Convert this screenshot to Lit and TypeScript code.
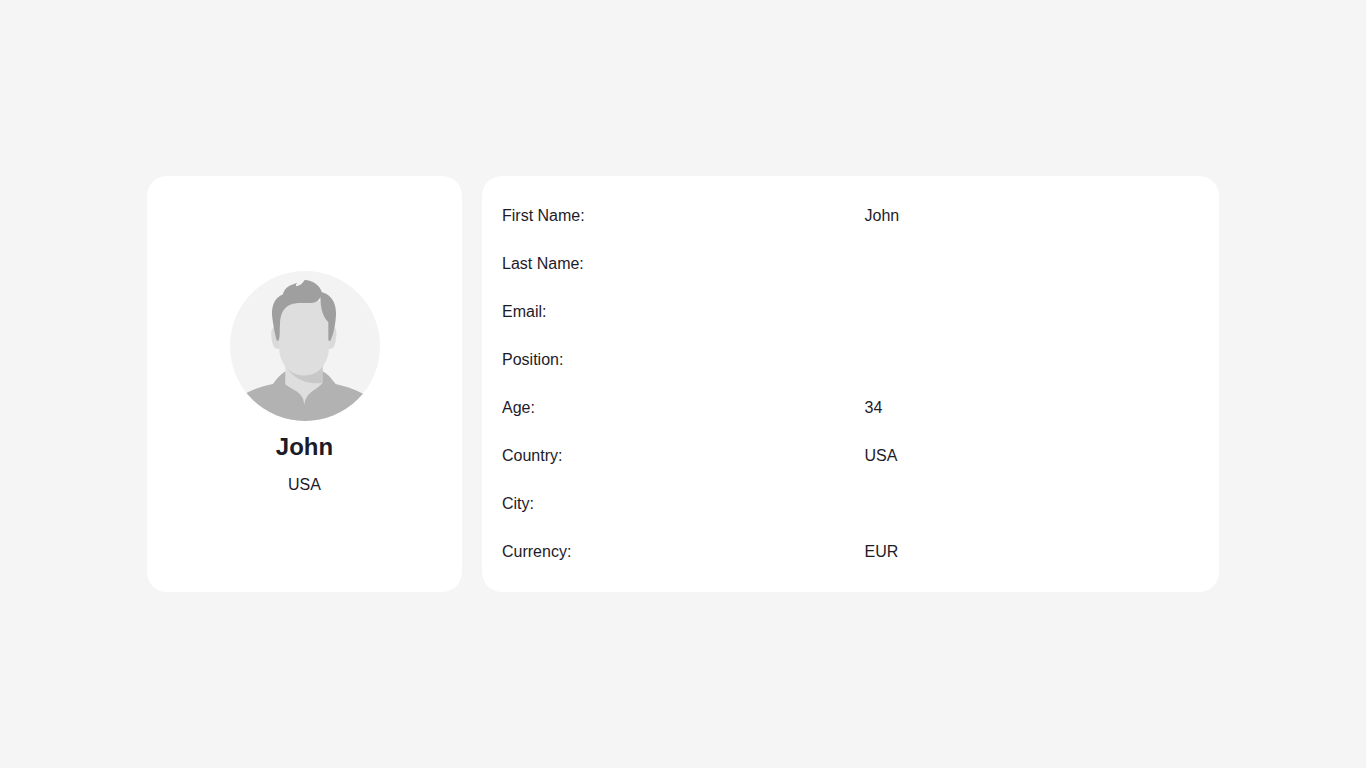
import { LitElement, css, html } from "lit";
import { customElement, property } from "lit/decorators.js";

interface Profile {
  firstName: string;
  lastName: string;
  email: string;
  position: string;
  age: string;
  country: string;
  city: string;
  currency: string;
}

@customElement("user-avatar")
export class UserAvatar extends LitElement {
  static styles = css`
    :host {
      display: block;
      width: 150px;
      height: 150px;
      border-radius: 50%;
      overflow: hidden;
      background: #f3f3f3;
    }
    .picture {
      display: block;
      width: 100%;
      height: 100%;
    }
  `;

  render() {
    return html`
      <svg class="picture" viewBox="15 18 450 450" aria-hidden="true">
        <!-- ears -->
        <path fill="#dadada" d="M146 187C136 194 138 214 141 227C144 243 150 254 162 251L166 190Z" />
        <path fill="#dadada" d="M328 187C337 194 335 214 332 227C329 243 325 253 312 251L308 190Z" />
        <!-- neck -->
        <path fill="#dedede" d="M181 290H293V400L240 440L181 400Z" />
        <path fill="#c9c8c8" d="M181 303C194 321 215 331 238 331C262 331 281 321 293 300V353C250 360 206 344 181 303Z" />
        <!-- face -->
        <path fill="#dedede" d="M163 130Q166 98 238 100Q309 98 312 165V250C311 273 304 288 294 304C280 322 262 331 238 331C212 331 191 319 180 303C168 286 164 271 162 250Z" />
        <!-- shirt -->
        <path fill="#b2b2b2" d="M181 319V358C200 376 236 378 238 420C242 379 277 375 293 353V319C311 329 319 341 332 357C358 363 388 372 414 386V480H60V386C88 372 116 362 144 357C155 342 165 329 181 319Z" />
        <!-- hair -->
        <path fill="#9f9f9f" d="M174 88C177 69 194 60 217 53C212 58 212 61 214 64C224 62 232 57 239 45C262 46 284 60 291 82C316 88 333 111 333 144C333 173 325 210 317 225Q314 231 310 225V172C294 155 287 133 286 96C281 109 271 114 252 114H231C183 112 166 137 165 178C163 201 166 215 161 226Q158 231 155 225C150 209 144 177 141 150C140 120 150 98 174 88Z" />
      </svg>
    `;
  }
}

@customElement("app-root")
export class AppRoot extends LitElement {
  static styles = css`
    :host {
      display: flex;
      align-items: center;
      justify-content: center;
      box-sizing: border-box;
      min-height: 100vh;
      padding: 20px;
      background: #f5f5f5;
      color: #1e1b29;
      font: 16px/24px "Liberation Sans", Arial, sans-serif;
    }
    .profile {
      display: grid;
      grid-template-columns: minmax(0, 315fr) minmax(0, 737fr);
      gap: 20px;
      width: 100%;
      max-width: 1072px;
    }
    .card {
      background: #ffffff;
      border-radius: 20px;
    }
    .summary {
      display: flex;
      flex-direction: column;
      align-items: center;
      justify-content: center;
      gap: 8px;
      padding: 20px;
    }
    .name {
      margin: 0;
      font-size: 24px;
      line-height: 36px;
      font-weight: 700;
    }
    .country {
      margin: 0;
    }
    .details {
      margin: 0;
      padding: 16px 20px;
    }
    .row {
      display: grid;
      grid-template-columns: 1fr 1fr;
      gap: 28px;
      padding: 12px 0;
    }
    .value {
      margin: 0;
    }
  `;

  @property({ attribute: false })
  profile: Profile = {
    firstName: "John",
    lastName: "",
    email: "",
    position: "",
    age: "34",
    country: "USA",
    city: "",
    currency: "EUR",
  };

  render() {
    const p = this.profile;
    const rows: [string, string][] = [
      ["First Name:", p.firstName],
      ["Last Name:", p.lastName],
      ["Email:", p.email],
      ["Position:", p.position],
      ["Age:", p.age],
      ["Country:", p.country],
      ["City:", p.city],
      ["Currency:", p.currency],
    ];
    return html`
      <main class="profile">
        <section class="card summary">
          <user-avatar></user-avatar>
          <h2 class="name">${p.firstName}</h2>
          <p class="country">${p.country}</p>
        </section>
        <dl class="card details">
          ${rows.map(
            ([label, value]) => html`
              <div class="row">
                <dt>${label}</dt>
                <dd class="value">${value}</dd>
              </div>
            `
          )}
        </dl>
      </main>
    `;
  }
}
